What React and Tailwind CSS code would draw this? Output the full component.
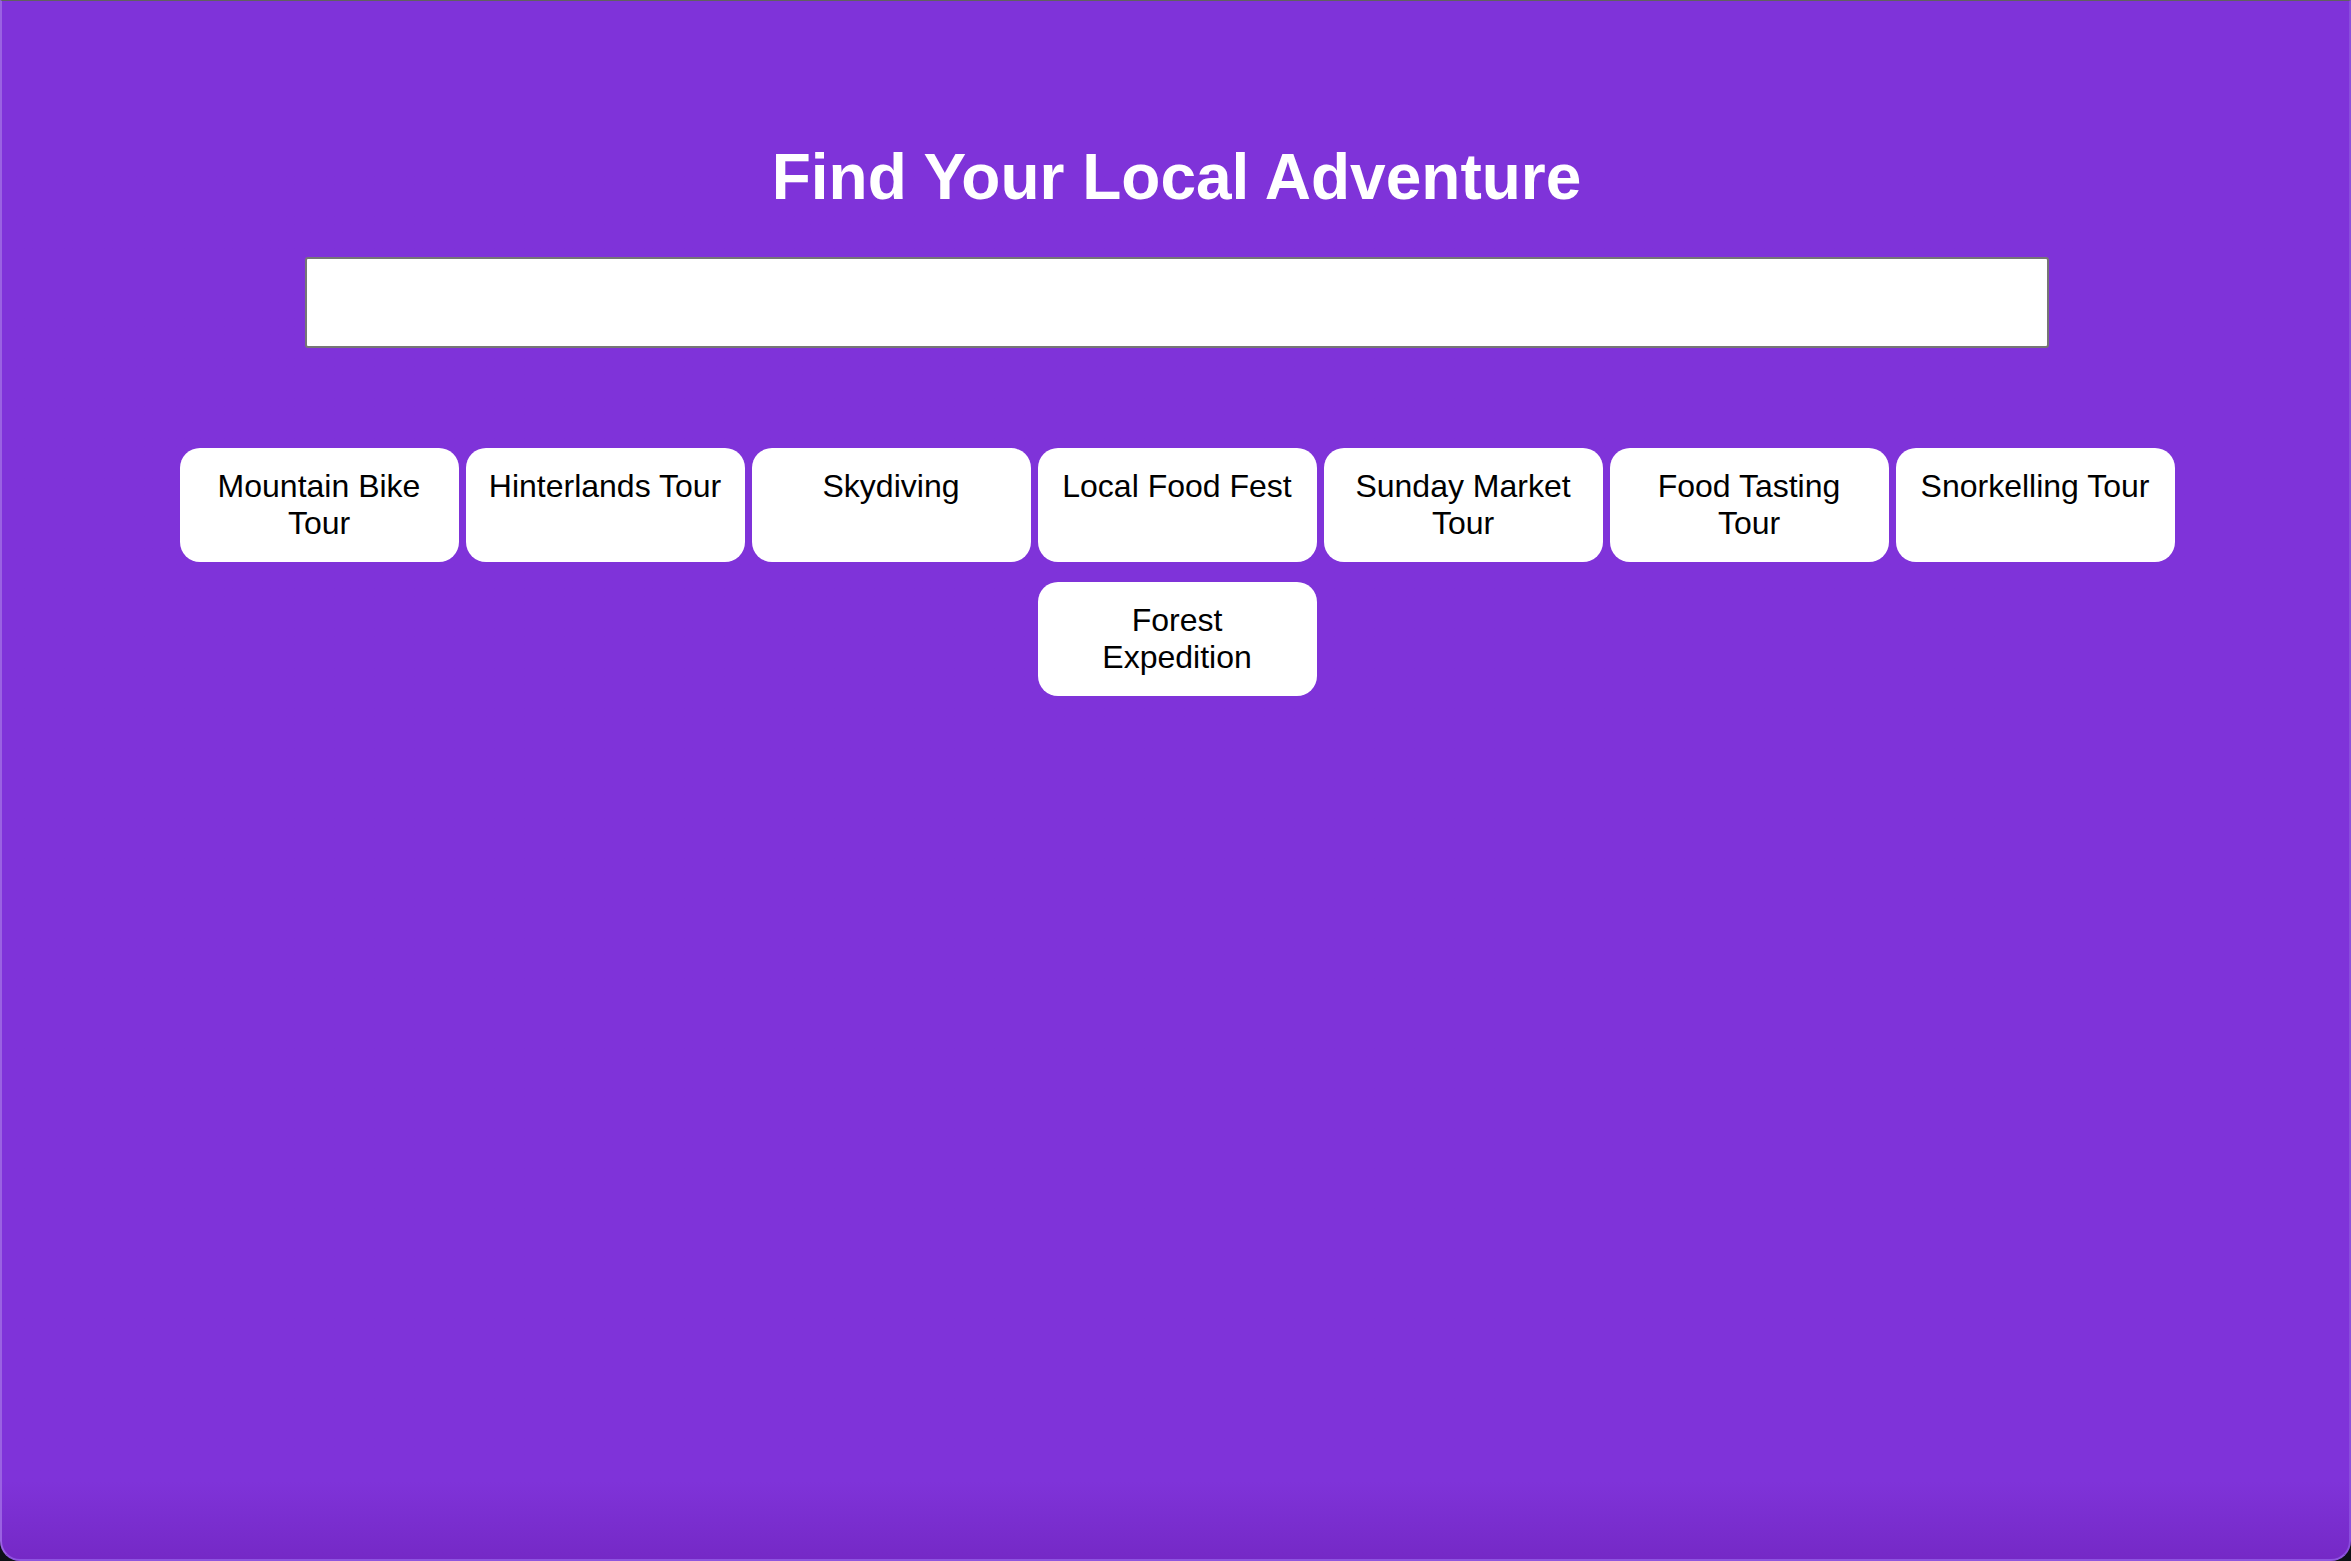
import React, { useState } from "react";

const adventures = [
  "Mountain Bike Tour",
  "Hinterlands Tour",
  "Skydiving",
  "Local Food Fest",
  "Sunday Market Tour",
  "Food Tasting Tour",
  "Snorkelling Tour",
  "Forest Expedition",
];

function App() {
  const [query, setQuery] = useState("");

  const filtered = adventures.filter((item) =>
    item.toLowerCase().includes(query.toLowerCase())
  );

  return (
    <div className="w-[2351px] h-[1561px] bg-[#0d1117] overflow-hidden">
      <div
        className="h-full w-full rounded-b-[20px] border-t border-t-[#606060] border-l-2 border-l-[#9a62e2] border-r-2 border-r-[#8a4ddd] border-b-2 border-b-[#8e55df] bg-linear-to-b from-[#7f33d9] from-[95%] to-[#7529c6] font-['Liberation_Sans',Arial,sans-serif]"
      >
        <div className="pt-[139px] pl-[2px] flex flex-col items-center">
          <h1 className="text-[64px] leading-[74px] font-bold text-white">
            Find Your Local Adventure
          </h1>
          <input
            value={query}
            onChange={(e) => setQuery(e.target.value)}
            type="text"
            className="mt-[43px] w-[1744px] h-[91px] bg-white border-2 border-[#767676] rounded-[3px] px-4 text-[32px] outline-none"
          />
        </div>

        <div className="mt-[100px] pl-[3px]">
          <div className="mx-auto w-[1995px] flex flex-wrap justify-center gap-x-[7px] gap-y-[20px]">
            {filtered.map((item, i) => (
              <div
                key={i}
                className="w-[279px] min-h-[114px] bg-white rounded-[20px] px-[20px] pt-[20px] pb-[20px] text-center text-black text-[32px] leading-[37px]"
              >
                {item}
              </div>
            ))}
          </div>
        </div>
      </div>
    </div>
  );
}

export default App;
